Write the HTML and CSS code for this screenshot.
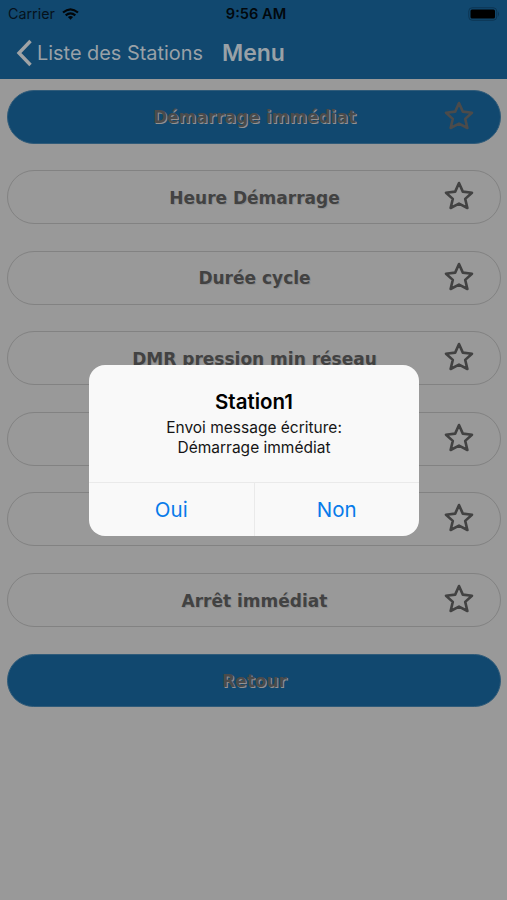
FILE: index.html
```html
<!DOCTYPE html>
<html lang="fr">
<head>
<meta charset="utf-8">
<title>Menu</title>
<link rel="stylesheet" href="styles.css">
</head>
<body>
<svg class="defs" width="0" height="0" aria-hidden="true">
  <symbol id="star" viewBox="0 0 30 30">
    <path d="M15 2 L18.8 10.600 L28 11.700 L21.200 17.900 L23.400 27 L15 22.600 L6.600 27 L8.800 17.900 L2 11.700 L11.200 10.600 Z" fill="none" stroke="currentColor" stroke-width="2.6" stroke-linejoin="round"/>
  </symbol>
</svg>
<div class="screen">
  <header class="header">
    <div class="status">
      <div class="carrier"><span class="carrier-name">Carrier</span>
        <svg class="wifi" viewBox="0 0 17 12"><g fill="none" stroke="currentColor" stroke-width="2.2"><path d="M1 4.5 Q8.500 -1.900 16 4.500"/><path d="M3.700 7.300 Q8.500 3.300 13.300 7.300"/></g><path d="M5.900 9 Q8.500 6.900 11.100 9 L8.500 11.700 Z" fill="currentColor"/></svg>
      </div>
      <div class="clock">9:56 AM</div>
      <div class="power"><svg class="battery" viewBox="0 0 32 14"><rect x=".75" y=".75" width="28" height="12.500" rx="3.500" fill="none" stroke="#0c3553"/><rect x="2.500" y="2.500" width="24.500" height="9" rx="1.500" fill="#000"/><path d="M30 4.500 Q32 7 30 9.500 Z" fill="#0c3553"/></svg></div>
    </div>
    <nav class="navbar">
      <svg class="back" viewBox="0 0 17 28"><path d="M14.500 2 L3 14 L14.500 26" fill="none" stroke="currentColor" stroke-width="3.400"/></svg>
      <span class="back-label">Liste des Stations</span>
      <span class="title">Menu</span>
    </nav>
  </header>
  <main class="list">
    <div class="item primary"><span class="label">Démarrage immédiat</span><svg class="star"><use href="#star"/></svg></div>
    <div class="item"><span class="label">Heure Démarrage</span><svg class="star"><use href="#star"/></svg></div>
    <div class="item"><span class="label">Durée cycle</span><svg class="star"><use href="#star"/></svg></div>
    <div class="item"><span class="label">DMR pression min réseau</span><svg class="star"><use href="#star"/></svg></div>
    <div class="item"><svg class="star"><use href="#star"/></svg></div>
    <div class="item"><svg class="star"><use href="#star"/></svg></div>
    <div class="item"><span class="label">Arrêt immédiat</span><svg class="star"><use href="#star"/></svg></div>
    <div class="item primary last"><span class="label">Retour</span></div>
  </main>
  <section class="dialog" role="dialog">
    <div class="message">
      <h1 class="heading">Station1</h1>
      <p class="text"><span class="line">Envoi message écriture:</span><span class="line">Démarrage immédiat</span></p>
    </div>
    <div class="actions"><button class="action">Oui</button><button class="action">Non</button></div>
  </section>
</div>
</body>
</html>
```

FILE: styles.css
```css
* { box-sizing: border-box; }
body { margin: 0; background: #999; font-family: Inter, "Liberation Sans", sans-serif; }
.defs { position: absolute; }
.screen { position: relative; width: 507px; height: 900px; overflow: hidden; background: #999; }
.header { height: 79px; background: #11486f; }
.status { display: grid; grid-template-columns: 1fr auto 1fr; align-items: center; height: 27px; padding: 0 7px 0 8px; color: #06121c; }
.carrier { display: flex; align-items: center; gap: 7px; font-size: 14.3px; line-height: 18px; }
.wifi { width: 17px; height: 12px; color: #020609; }
.clock { padding-left: 4px; font-size: 14.6px; line-height: 18px; font-weight: 600; color: #02080d; }
.power { display: flex; justify-content: flex-end; }
.battery { width: 32px; height: 14px; }
.navbar { display: flex; align-items: center; height: 51px; padding-left: 16px; color: #99a1a7; }
.back { width: 17px; height: 28px; color: #a0a3a5; }
.back-label { margin-left: 4px; font-size: 19.9px; white-space: nowrap; }
.title { margin-left: 19px; font-size: 23px; font-weight: 600; }
.list { display: flex; flex-direction: column; gap: 26.6px; padding: 10.5px 6px 0 7px; }
.item { display: grid; grid-template-columns: 1fr; align-items: center; height: 54px; border: 1.5px solid #828282; border-radius: 27px; color: #424242; }
.label { grid-area: 1 / 1; justify-self: center; padding: 1px 0 0 1px; font: bold 17px/24px "DejaVu Sans", sans-serif; white-space: nowrap; text-shadow: 1px 1px 0 #8b8b8b; }
.star { grid-area: 1 / 1; justify-self: end; width: 30px; height: 30px; margin: 0 26px 2px 0; }
.primary { background: #11486f; border-color: #305b79; color: #4b4b4b; }
.primary .label { text-shadow: 1px 1px 0 #929292; }
.last { height: 53px; }
.dialog { position: absolute; left: 89px; top: 365px; width: 330px; height: 171px; display: flex; flex-direction: column; overflow: hidden; border-radius: 16px; background: #f9f9f9; }
.message { height: 117px; padding-top: 24px; text-align: center; }
.heading { margin: 0; font-size: 20.5px; line-height: 26px; font-weight: 600; color: #000; }
.text { margin: 3px 0 0; font-size: 15.5px; line-height: 19.5px; color: #151515; }
.line { display: block; }
.actions { display: flex; flex: 1; border-top: 1px solid #eaeaea; }
.action { flex: 1; padding: 1px 0 0; border: 0; background: transparent; color: #087bea; font: 20.5px/26px Inter, "Liberation Sans", sans-serif; }
.action + .action { border-left: 1px solid #eaeaea; }
```
